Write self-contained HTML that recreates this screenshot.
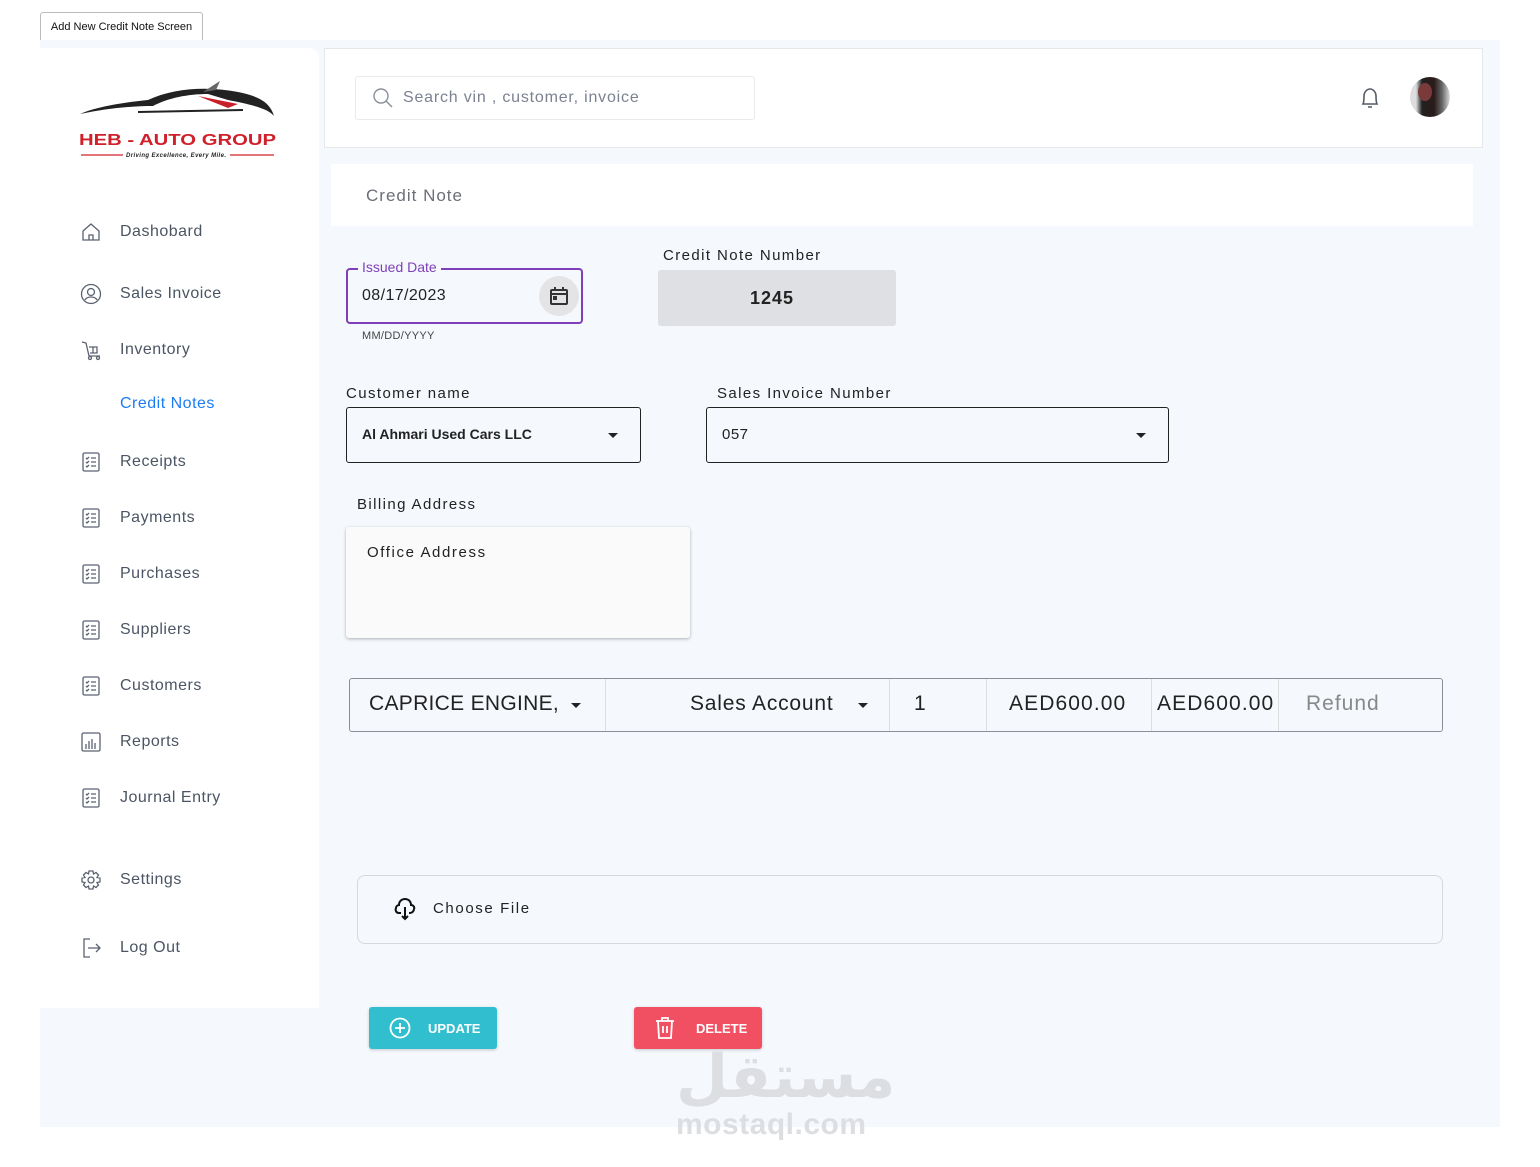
<!DOCTYPE html>
<html><head><meta charset="utf-8"><style>
*{box-sizing:border-box;margin:0;padding:0}
body{width:1540px;height:1167px;background:#fff;position:relative;overflow:hidden;font-family:"Liberation Sans",sans-serif;color:#222}
.a{position:absolute}
.nav{position:absolute;left:80px;font-size:16px;color:#4b5563;display:flex;align-items:center;letter-spacing:.5px}
.nav svg{width:22px;height:22px;margin-right:18px;fill:none;stroke:#5b6270;stroke-width:1.3}
.lbl{position:absolute;font-size:15px;letter-spacing:1.4px;color:#222}
</style></head><body>
<div class="a" style="left:40px;top:12px;width:163px;height:30px;border:1px solid #bbb;border-radius:3px;font-size:11px;line-height:28px;text-align:center;color:#111;background:#fff">Add New Credit Note Screen</div>
<div class="a" style="left:40px;top:40px;width:1460px;height:1087px;background:#f5f9fd"></div>
<div class="a" style="left:40px;top:48px;width:279px;height:960px;background:#fff;border-radius:0 10px 0 0"></div>
<svg class="a" style="left:78px;top:78px" width="200" height="82" viewBox="0 0 200 82">
<path d="M2 36 C20 28 50 24 70 22 C95 10 130 8 160 14 C180 18 192 24 196 38 C190 30 170 26 150 22 L130 16 C110 16 90 20 75 28 C55 28 30 30 2 36Z" fill="#222"/>
<path d="M125 14 L142 3 L138 12Z" fill="#666"/>
<path d="M120 18 L160 26 L150 30 Z" fill="#c8202a"/>
<path d="M60 34 L165 32" stroke="#222" stroke-width="2"/>
<text x="1" y="67" font-family="Liberation Sans" font-weight="bold" font-size="16" fill="#d0202a" textLength="197" lengthAdjust="spacingAndGlyphs">HEB - AUTO GROUP</text>
<path d="M3 77 H45 M152 77 H196" stroke="#d0202a" stroke-width="1.2"/>
<text x="48" y="79" font-family="Liberation Sans" font-style="italic" font-weight="bold" font-size="6" fill="#222" textLength="100">Driving Excellence, Every Mile.</text>
</svg>
<div class="nav" style="top:221px"><svg viewBox="0 0 22 22"><path d="M3 10 L11 3 L19 10 V19 H3Z M9 19 V14 H13 V19"/></svg>Dashobard</div>
<div class="nav" style="top:283px"><svg viewBox="0 0 22 22"><circle cx="11" cy="11" r="9.5"/><circle cx="11" cy="9" r="3.5"/><path d="M5 17 C7 13 15 13 17 17"/></svg>Sales Invoice</div>
<div class="nav" style="top:339px"><svg viewBox="0 0 22 22"><path d="M2 3 L6 4 L9 17 H20 M9 8 H17 V14 H10 M13 8 V14"/><circle cx="10" cy="19" r="1.5"/><circle cx="18" cy="19" r="1.5"/></svg>Inventory</div>
<div class="nav" style="top:395px;color:#1d7cf2;left:120px">Credit Notes</div>
<div class="nav" style="top:451px"><svg viewBox="0 0 22 22"><rect x="3" y="2" width="16" height="18" rx="1.5"/><path d="M6 7 L7 8 L9 6 M11 7 H16 M6 11 L7 12 L9 10 M11 11 H16 M6 15 L7 16 L9 14 M11 15 H16"/></svg>Receipts</div>
<div class="nav" style="top:507px"><svg viewBox="0 0 22 22"><rect x="3" y="2" width="16" height="18" rx="1.5"/><path d="M6 7 L7 8 L9 6 M11 7 H16 M6 11 L7 12 L9 10 M11 11 H16 M6 15 L7 16 L9 14 M11 15 H16"/></svg>Payments</div>
<div class="nav" style="top:563px"><svg viewBox="0 0 22 22"><rect x="3" y="2" width="16" height="18" rx="1.5"/><path d="M6 7 L7 8 L9 6 M11 7 H16 M6 11 L7 12 L9 10 M11 11 H16 M6 15 L7 16 L9 14 M11 15 H16"/></svg>Purchases</div>
<div class="nav" style="top:619px"><svg viewBox="0 0 22 22"><rect x="3" y="2" width="16" height="18" rx="1.5"/><path d="M6 7 L7 8 L9 6 M11 7 H16 M6 11 L7 12 L9 10 M11 11 H16 M6 15 L7 16 L9 14 M11 15 H16"/></svg>Suppliers</div>
<div class="nav" style="top:675px"><svg viewBox="0 0 22 22"><rect x="3" y="2" width="16" height="18" rx="1.5"/><path d="M6 7 L7 8 L9 6 M11 7 H16 M6 11 L7 12 L9 10 M11 11 H16 M6 15 L7 16 L9 14 M11 15 H16"/></svg>Customers</div>
<div class="nav" style="top:731px"><svg viewBox="0 0 22 22"><rect x="2" y="2" width="18" height="18" rx="1.5"/><path d="M6 18 V13 M9 18 V10 M12 18 V8 M15 18 V12"/></svg>Reports</div>
<div class="nav" style="top:787px"><svg viewBox="0 0 22 22"><rect x="3" y="2" width="16" height="18" rx="1.5"/><path d="M6 7 L7 8 L9 6 M11 7 H16 M6 11 L7 12 L9 10 M11 11 H16 M6 15 L7 16 L9 14 M11 15 H16"/></svg>Journal Entry</div>
<div class="nav" style="top:869px"><svg viewBox="0 0 22 22"><circle cx="11" cy="11" r="3"/><path d="M9 2 H13 L13.5 5 L16 3.5 L18.5 6 L17 8.5 L20 9 V13 L17 13.5 L18.5 16 L16 18.5 L13.5 17 L13 20 H9 L8.5 17 L6 18.5 L3.5 16 L5 13.5 L2 13 V9 L5 8.5 L3.5 6 L6 3.5 L8.5 5Z"/></svg>Settings</div>
<div class="nav" style="top:937px"><svg viewBox="0 0 22 22"><path d="M10 2 H4 V20 H10 M8 11 H20 M16 7 L20 11 L16 15"/></svg>Log Out</div>
<div class="a" style="left:324px;top:48px;width:1159px;height:100px;background:#fff;border:1px solid #e5e7eb"></div>
<div class="a" style="left:355px;top:76px;width:400px;height:44px;border:1px solid #e8eaee;border-radius:3px;background:#fff"></div>
<svg class="a" style="left:372px;top:87px" width="22" height="22" viewBox="0 0 22 22" fill="none" stroke="#8a8f99" stroke-width="1.4"><circle cx="9" cy="9" r="7"/><path d="M14 14 L20 20"/></svg>
<div class="a" style="left:403px;top:89px;font-size:16px;color:#7b8190;letter-spacing:.8px">Search vin , customer, invoice</div>
<svg class="a" style="left:1359px;top:86px" width="22" height="24" viewBox="0 0 22 24" fill="none" stroke="#555b66" stroke-width="1.6"><path d="M4 18 C5 16 5 13 5 10 C5 6 8 3 11 3 C14 3 17 6 17 10 C17 13 17 16 18 18 Z M9 21 H13"/></svg>
<div class="a" style="left:1410px;top:77px;width:40px;height:40px;border-radius:50%;background:linear-gradient(90deg,#ddd 0 15%,#222 30%,#2a1a1a 60%,#666 80%,#ddd 100%)"></div>
<div class="a" style="left:1418px;top:83px;width:14px;height:18px;border-radius:50%;background:#7a3a3a"></div>
<div class="a" style="left:331px;top:164px;width:1142px;height:62px;background:#fff"></div>
<div class="a" style="left:366px;top:186px;font-size:17px;color:#6b6f78;letter-spacing:1px">Credit Note</div>
<div class="a" style="left:346px;top:268px;width:237px;height:56px;border:2px solid #7e3fb8;border-radius:4px"></div>
<div class="a" style="left:358px;top:259px;padding:0 4px;font-size:14px;color:#7e3fb8;background:#f5f9fd">Issued Date</div>
<div class="a" style="left:362px;top:287px;font-size:16px;color:#222;letter-spacing:.4px">08/17/2023</div>
<div class="a" style="left:539px;top:276px;width:40px;height:40px;border-radius:50%;background:#e4e4e6"></div>
<svg class="a" style="left:549px;top:286px" width="20" height="20" viewBox="0 0 20 20" fill="none" stroke="#333" stroke-width="2"><rect x="2" y="4" width="16" height="14" rx="1"/><path d="M6 1 V5 M14 1 V5 M2 8 H18"/><rect x="5" y="11" width="2" height="2" fill="#333"/></svg>
<div class="a" style="left:362px;top:330px;font-size:11px;color:#444;letter-spacing:.3px">MM/DD/YYYY</div>
<div class="lbl" style="left:663px;top:247px">Credit Note Number</div>
<div class="a" style="left:658px;top:270px;width:238px;height:56px;background:#dee0e3;border-radius:3px;font-size:18px;font-weight:bold;text-align:center;line-height:56px;letter-spacing:1px;padding-right:10px">1245</div>
<div class="lbl" style="left:346px;top:385px">Customer name</div>
<div class="a" style="left:346px;top:407px;width:295px;height:56px;border:1px solid #222;border-radius:3px"></div>
<div class="a" style="left:362px;top:426px;font-size:14px;font-weight:bold;color:#222">Al Ahmari Used Cars LLC</div>
<div class="a" style="left:608px;top:433px;border:5px solid transparent;border-top-color:#222;border-bottom:0"></div>
<div class="lbl" style="left:717px;top:385px">Sales Invoice Number</div>
<div class="a" style="left:706px;top:407px;width:463px;height:56px;border:1px solid #222;border-radius:3px"></div>
<div class="a" style="left:722px;top:426px;font-size:15px;color:#222;letter-spacing:.5px">057</div>
<div class="a" style="left:1136px;top:433px;border:5px solid transparent;border-top-color:#222;border-bottom:0"></div>
<div class="lbl" style="left:357px;top:496px">Billing Address</div>
<div class="a" style="left:346px;top:527px;width:344px;height:111px;background:#fafafa;border-radius:3px;box-shadow:0 1px 3px rgba(0,0,0,.3)"></div>
<div class="lbl" style="left:367px;top:544px;letter-spacing:1.6px">Office Address</div>
<div class="a" style="left:349px;top:678px;width:1094px;height:54px;border:1px solid #8a8e96;border-radius:3px"></div>
<div class="a" style="left:605px;top:679px;width:1px;height:52px;background:#ddd"></div>
<div class="a" style="left:889px;top:679px;width:1px;height:52px;background:#ddd"></div>
<div class="a" style="left:986px;top:679px;width:1px;height:52px;background:#ddd"></div>
<div class="a" style="left:1151px;top:679px;width:1px;height:52px;background:#ddd"></div>
<div class="a" style="left:1278px;top:679px;width:1px;height:52px;background:#ddd"></div>
<div class="a" style="left:369px;top:692px;font-size:21px;color:#222;letter-spacing:.3px">CAPRICE ENGINE,</div>
<div class="a" style="left:571px;top:703px;border:5px solid transparent;border-top-color:#222;border-bottom:0"></div>
<div class="a" style="left:690px;top:692px;font-size:21px;color:#222;letter-spacing:.8px">Sales Account</div>
<div class="a" style="left:858px;top:703px;border:5px solid transparent;border-top-color:#222;border-bottom:0"></div>
<div class="a" style="left:914px;top:692px;font-size:21px;color:#222">1</div>
<div class="a" style="left:1009px;top:692px;font-size:21px;color:#222;letter-spacing:1.1px">AED600.00</div>
<div class="a" style="left:1157px;top:692px;font-size:21px;color:#222;letter-spacing:1.1px">AED600.00</div>
<div class="a" style="left:1306px;top:692px;font-size:21px;color:#888;letter-spacing:1px">Refund</div>
<div class="a" style="left:357px;top:875px;width:1086px;height:69px;border:1px solid #d6d8dc;border-radius:8px"></div>
<svg class="a" style="left:393px;top:896px" width="24" height="26" viewBox="0 0 24 26" fill="none" stroke="#111" stroke-width="2"><path d="M8 17 H6 C3 17 2 14 3 12 C3 10 5 9 6 9 C6 5 9 3 12 3 C15 3 18 5 18 9 C20 9 22 11 21 13 C21 15 19 17 17 17 H16 M12 11 V23 M9 20 L12 23 L15 20"/></svg>
<div class="lbl" style="left:433px;top:900px;letter-spacing:1.6px">Choose File</div>
<div class="a" style="left:369px;top:1007px;width:128px;height:42px;background:#31bfcf;border-radius:3px;box-shadow:0 1px 3px rgba(0,0,0,.2)"></div>
<svg class="a" style="left:389px;top:1017px" width="22" height="22" viewBox="0 0 22 22" fill="none" stroke="#fff" stroke-width="1.8"><circle cx="11" cy="11" r="9.5"/><path d="M11 6 V16 M6 11 H16"/></svg>
<div class="a" style="left:428px;top:1021px;font-size:13px;color:#fff;font-weight:bold">UPDATE</div>
<div class="a" style="left:634px;top:1007px;width:128px;height:42px;background:#f14f62;border-radius:3px;box-shadow:0 1px 3px rgba(0,0,0,.2)"></div>
<svg class="a" style="left:654px;top:1016px" width="22" height="24" viewBox="0 0 22 24" fill="none" stroke="#fff" stroke-width="1.8"><path d="M2 5 H20 M8 5 V2 H14 V5 M4 5 L5 22 H17 L18 5 M9 10 V17 M13 10 V17"/></svg>
<div class="a" style="left:696px;top:1021px;font-size:13px;color:#fff;font-weight:bold">DELETE</div>
<div class="a" style="left:676px;top:1042px;font-size:60px;font-weight:bold;color:#dcdee2;font-family:'Liberation Sans','DejaVu Sans',sans-serif">مستقل</div>
<div class="a" style="left:676px;top:1108px;font-size:30px;font-weight:bold;color:#dcdee2;letter-spacing:.5px">mostaql.com</div>
</body></html>
